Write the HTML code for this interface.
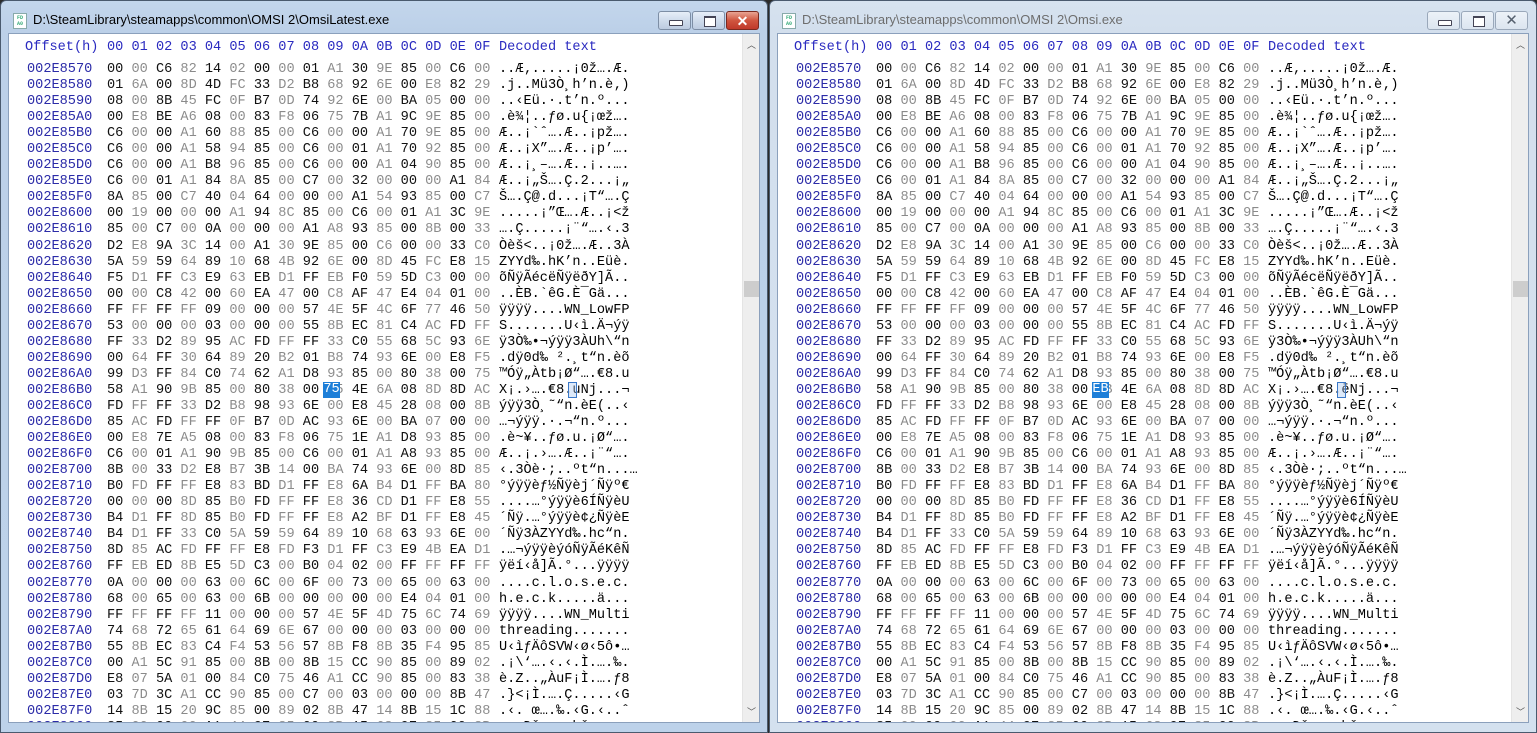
<!DOCTYPE html>
<html><head><meta charset="utf-8">
<style>
*{margin:0;padding:0;box-sizing:border-box}
body{width:1537px;height:733px;overflow:hidden;background:#2b2b2b;font-family:"Liberation Sans",sans-serif;position:relative}
.win{position:absolute;top:0;height:733px;border:1px solid #4a5a6e;border-radius:6px 6px 0 0;overflow:hidden}
.w1{left:0;width:768px;background:linear-gradient(#c3d6ec,#bcd0e8 30px,#bdd2ea);}
.w2{left:769px;width:768px;background:linear-gradient(#d6e2ef,#d3dfed 30px,#d4e1ef);}
.title{position:absolute;left:32px;top:11px;font-size:13px;color:#000}
.w2 .title{color:#6d6d6d}
.ico{position:absolute;left:12px;top:12px;width:14px;height:16px;background:#fff;border:1px solid #8aa;font:bold 5px "Liberation Mono",monospace;color:#3a7;line-height:6px;text-align:center;padding-top:1px}
.btn{position:absolute;top:10px;height:19px;border:1px solid #7d8ea5;border-radius:3px;background:linear-gradient(#e6eef8,#cfdcec 50%,#bccbe0)}
.w2 .btn{border-color:#9aa8ba;background:linear-gradient(#edf2f8,#dce5f0)}
.b1{left:657px;width:33px}.b2{left:691px;width:33px}.b3{left:725px;width:33px;background:linear-gradient(#e8a493,#d0553f 50%,#c0392a)!important;border-color:#7a2a20!important}
.w2 .b3{background:linear-gradient(#edf2f8,#dce5f0)!important;border-color:#9aa8ba!important}
.b1:after{content:"";position:absolute;left:10px;top:8px;width:12px;height:4px;border:1px solid #445;background:#fff;border-radius:1px}
.b2:after{content:"";position:absolute;left:11px;top:4px;width:10px;height:8px;border:1px solid #445;border-top-width:2px;background:#fff}
.b3 span{position:absolute;left:0;right:0;top:0;text-align:center;font:bold 14px/18px "Liberation Sans",sans-serif;color:#fff}
.w2 .b3 span{color:#55606e;font-weight:normal;font-size:15px}
.client{position:absolute;left:7px;top:32px;width:752px;height:690px;background:#fff;border:1px solid #8ba0bc;overflow:hidden}
.sb{position:absolute;right:0;top:0;width:17px;height:100%;background:#eeeeee;border-left:1px solid #e4e4e4}
.sb .th{position:absolute;left:1px;top:247px;width:15px;height:16px;background:#cdcdcd}
.sb .up,.sb .dn{position:absolute;left:0;width:17px;text-align:center;font:9px "Liberation Sans",sans-serif;color:#555}
.sb .up{top:4px}.sb .dn{bottom:4px}
.data{position:absolute;left:18px;top:28px;font:13.6px/16.05px "Liberation Mono",monospace;white-space:pre;color:#000}
.hdr{position:absolute;left:16px;top:6px;font:13.6px/16px "Liberation Mono",monospace;white-space:pre;color:#2a2ac0}
.hdr span{display:inline-block}
.hdr .a{width:82px}.hdr .b{width:392px}
.o{color:#2b2ba8;display:inline-block;width:80px}
.h{display:inline-block;width:392px;background:repeating-linear-gradient(90deg,#111 0 3ch,#8a8a8a 3ch 6ch);-webkit-background-clip:text;background-clip:text;color:transparent}
.hl{position:absolute;width:17px;height:16px;background:#1e7fd8;color:#fff;font:13.6px/16px "Liberation Mono",monospace;text-align:center}
.hb{position:absolute;width:9px;height:16px;border:1px solid #3a78c8;background:rgba(170,200,240,.4)}
</style></head><body>

<div class="win w1">
 <div class="ico">FD<br>A0</div>
 <div class="title">D:\SteamLibrary\steamapps\common\OMSI 2\OmsiLatest.exe</div>
 <div class="btn b1"></div><div class="btn b2"></div><div class="btn b3"><span>✕</span></div>
 <div class="client">
  <div class="hdr"><span class="a">Offset(h)</span><span class="b">00 01 02 03 04 05 06 07 08 09 0A 0B 0C 0D 0E 0F</span>Decoded text</div>
<div class="data"><span class="o">002E8570</span><span class="h">00 00 C6 82 14 02 00 00 01 A1 30 9E 85 00 C6 00 </span>..Æ‚.....¡0ž….Æ.
<span class="o">002E8580</span><span class="h">01 6A 00 8D 4D FC 33 D2 B8 68 92 6E 00 E8 82 29 </span>.j..Mü3Ò¸h’n.è‚)
<span class="o">002E8590</span><span class="h">08 00 8B 45 FC 0F B7 0D 74 92 6E 00 BA 05 00 00 </span>..‹Eü.·.t’n.º...
<span class="o">002E85A0</span><span class="h">00 E8 BE A6 08 00 83 F8 06 75 7B A1 9C 9E 85 00 </span>.è¾¦..ƒø.u{¡œž….
<span class="o">002E85B0</span><span class="h">C6 00 00 A1 60 88 85 00 C6 00 00 A1 70 9E 85 00 </span>Æ..¡`ˆ….Æ..¡pž….
<span class="o">002E85C0</span><span class="h">C6 00 00 A1 58 94 85 00 C6 00 01 A1 70 92 85 00 </span>Æ..¡X”….Æ..¡p’….
<span class="o">002E85D0</span><span class="h">C6 00 00 A1 B8 96 85 00 C6 00 00 A1 04 90 85 00 </span>Æ..¡¸–….Æ..¡..….
<span class="o">002E85E0</span><span class="h">C6 00 01 A1 84 8A 85 00 C7 00 32 00 00 00 A1 84 </span>Æ..¡„Š….Ç.2...¡„
<span class="o">002E85F0</span><span class="h">8A 85 00 C7 40 04 64 00 00 00 A1 54 93 85 00 C7 </span>Š….Ç@.d...¡T“….Ç
<span class="o">002E8600</span><span class="h">00 19 00 00 00 A1 94 8C 85 00 C6 00 01 A1 3C 9E </span>.....¡”Œ….Æ..¡&lt;ž
<span class="o">002E8610</span><span class="h">85 00 C7 00 0A 00 00 00 A1 A8 93 85 00 8B 00 33 </span>….Ç.....¡¨“….‹.3
<span class="o">002E8620</span><span class="h">D2 E8 9A 3C 14 00 A1 30 9E 85 00 C6 00 00 33 C0 </span>Òèš&lt;..¡0ž….Æ..3À
<span class="o">002E8630</span><span class="h">5A 59 59 64 89 10 68 4B 92 6E 00 8D 45 FC E8 15 </span>ZYYd‰.hK’n..Eüè.
<span class="o">002E8640</span><span class="h">F5 D1 FF C3 E9 63 EB D1 FF EB F0 59 5D C3 00 00 </span>õÑÿÃécëÑÿëðY]Ã..
<span class="o">002E8650</span><span class="h">00 00 C8 42 00 60 EA 47 00 C8 AF 47 E4 04 01 00 </span>..ÈB.`êG.È¯Gä...
<span class="o">002E8660</span><span class="h">FF FF FF FF 09 00 00 00 57 4E 5F 4C 6F 77 46 50 </span>ÿÿÿÿ....WN_LowFP
<span class="o">002E8670</span><span class="h">53 00 00 00 03 00 00 00 55 8B EC 81 C4 AC FD FF </span>S.......U‹ì.Ä¬ýÿ
<span class="o">002E8680</span><span class="h">FF 33 D2 89 95 AC FD FF FF 33 C0 55 68 5C 93 6E </span>ÿ3Ò‰•¬ýÿÿ3ÀUh\“n
<span class="o">002E8690</span><span class="h">00 64 FF 30 64 89 20 B2 01 B8 74 93 6E 00 E8 F5 </span>.dÿ0d‰ ².¸t“n.èõ
<span class="o">002E86A0</span><span class="h">99 D3 FF 84 C0 74 62 A1 D8 93 85 00 80 38 00 75 </span>™Óÿ„Àtb¡Ø“….€8.u
<span class="o">002E86B0</span><span class="h">58 A1 90 9B 85 00 80 38 00 75 4E 6A 08 8D 8D AC </span>X¡.›….€8.uNj...¬
<span class="o">002E86C0</span><span class="h">FD FF FF 33 D2 B8 98 93 6E 00 E8 45 28 08 00 8B </span>ýÿÿ3Ò¸˜“n.èE(..‹
<span class="o">002E86D0</span><span class="h">85 AC FD FF FF 0F B7 0D AC 93 6E 00 BA 07 00 00 </span>…¬ýÿÿ.·.¬“n.º...
<span class="o">002E86E0</span><span class="h">00 E8 7E A5 08 00 83 F8 06 75 1E A1 D8 93 85 00 </span>.è~¥..ƒø.u.¡Ø“….
<span class="o">002E86F0</span><span class="h">C6 00 01 A1 90 9B 85 00 C6 00 01 A1 A8 93 85 00 </span>Æ..¡.›….Æ..¡¨“….
<span class="o">002E8700</span><span class="h">8B 00 33 D2 E8 B7 3B 14 00 BA 74 93 6E 00 8D 85 </span>‹.3Òè·;..ºt“n...…
<span class="o">002E8710</span><span class="h">B0 FD FF FF E8 83 BD D1 FF E8 6A B4 D1 FF BA 80 </span>°ýÿÿèƒ½Ñÿèj´Ñÿº€
<span class="o">002E8720</span><span class="h">00 00 00 8D 85 B0 FD FF FF E8 36 CD D1 FF E8 55 </span>....…°ýÿÿè6ÍÑÿèU
<span class="o">002E8730</span><span class="h">B4 D1 FF 8D 85 B0 FD FF FF E8 A2 BF D1 FF E8 45 </span>´Ñÿ.…°ýÿÿè¢¿ÑÿèE
<span class="o">002E8740</span><span class="h">B4 D1 FF 33 C0 5A 59 59 64 89 10 68 63 93 6E 00 </span>´Ñÿ3ÀZYYd‰.hc“n.
<span class="o">002E8750</span><span class="h">8D 85 AC FD FF FF E8 FD F3 D1 FF C3 E9 4B EA D1 </span>.…¬ýÿÿèýóÑÿÃéKêÑ
<span class="o">002E8760</span><span class="h">FF EB ED 8B E5 5D C3 00 B0 04 02 00 FF FF FF FF </span>ÿëí‹å]Ã.°...ÿÿÿÿ
<span class="o">002E8770</span><span class="h">0A 00 00 00 63 00 6C 00 6F 00 73 00 65 00 63 00 </span>....c.l.o.s.e.c.
<span class="o">002E8780</span><span class="h">68 00 65 00 63 00 6B 00 00 00 00 00 E4 04 01 00 </span>h.e.c.k.....ä...
<span class="o">002E8790</span><span class="h">FF FF FF FF 11 00 00 00 57 4E 5F 4D 75 6C 74 69 </span>ÿÿÿÿ....WN_Multi
<span class="o">002E87A0</span><span class="h">74 68 72 65 61 64 69 6E 67 00 00 00 03 00 00 00 </span>threading.......
<span class="o">002E87B0</span><span class="h">55 8B EC 83 C4 F4 53 56 57 8B F8 8B 35 F4 95 85 </span>U‹ìƒÄôSVW‹ø‹5ô•…
<span class="o">002E87C0</span><span class="h">00 A1 5C 91 85 00 8B 00 8B 15 CC 90 85 00 89 02 </span>.¡\‘….‹.‹.Ì.….‰.
<span class="o">002E87D0</span><span class="h">E8 07 5A 01 00 84 C0 75 46 A1 CC 90 85 00 83 38 </span>è.Z..„ÀuF¡Ì.….ƒ8
<span class="o">002E87E0</span><span class="h">03 7D 3C A1 CC 90 85 00 C7 00 03 00 00 00 8B 47 </span>.}&lt;¡Ì.….Ç.....‹G
<span class="o">002E87F0</span><span class="h">14 8B 15 20 9C 85 00 89 02 8B 47 14 8B 15 1C 88 </span>.‹. œ….‰.‹G.‹..ˆ
<span class="o">002E8800</span><span class="h">85 00 00 00 A1 44 9E 85 00 8B 15 68 9E 85 00 8B </span>….¡Dž….‹.hž….‹</div>
  <div class="hl" style="left:314px;top:348px">75</div>
  <div class="hb" style="left:559px;top:348px"></div>
  <div class="sb"><div class="up">︿</div><div class="th"></div><div class="dn">﹀</div></div>
 </div>
</div>

<div class="win w2">
 <div class="ico">FD<br>A0</div>
 <div class="title">D:\SteamLibrary\steamapps\common\OMSI 2\Omsi.exe</div>
 <div class="btn b1"></div><div class="btn b2"></div><div class="btn b3"><span>✕</span></div>
 <div class="client">
  <div class="hdr"><span class="a">Offset(h)</span><span class="b">00 01 02 03 04 05 06 07 08 09 0A 0B 0C 0D 0E 0F</span>Decoded text</div>
<div class="data"><span class="o">002E8570</span><span class="h">00 00 C6 82 14 02 00 00 01 A1 30 9E 85 00 C6 00 </span>..Æ‚.....¡0ž….Æ.
<span class="o">002E8580</span><span class="h">01 6A 00 8D 4D FC 33 D2 B8 68 92 6E 00 E8 82 29 </span>.j..Mü3Ò¸h’n.è‚)
<span class="o">002E8590</span><span class="h">08 00 8B 45 FC 0F B7 0D 74 92 6E 00 BA 05 00 00 </span>..‹Eü.·.t’n.º...
<span class="o">002E85A0</span><span class="h">00 E8 BE A6 08 00 83 F8 06 75 7B A1 9C 9E 85 00 </span>.è¾¦..ƒø.u{¡œž….
<span class="o">002E85B0</span><span class="h">C6 00 00 A1 60 88 85 00 C6 00 00 A1 70 9E 85 00 </span>Æ..¡`ˆ….Æ..¡pž….
<span class="o">002E85C0</span><span class="h">C6 00 00 A1 58 94 85 00 C6 00 01 A1 70 92 85 00 </span>Æ..¡X”….Æ..¡p’….
<span class="o">002E85D0</span><span class="h">C6 00 00 A1 B8 96 85 00 C6 00 00 A1 04 90 85 00 </span>Æ..¡¸–….Æ..¡..….
<span class="o">002E85E0</span><span class="h">C6 00 01 A1 84 8A 85 00 C7 00 32 00 00 00 A1 84 </span>Æ..¡„Š….Ç.2...¡„
<span class="o">002E85F0</span><span class="h">8A 85 00 C7 40 04 64 00 00 00 A1 54 93 85 00 C7 </span>Š….Ç@.d...¡T“….Ç
<span class="o">002E8600</span><span class="h">00 19 00 00 00 A1 94 8C 85 00 C6 00 01 A1 3C 9E </span>.....¡”Œ….Æ..¡&lt;ž
<span class="o">002E8610</span><span class="h">85 00 C7 00 0A 00 00 00 A1 A8 93 85 00 8B 00 33 </span>….Ç.....¡¨“….‹.3
<span class="o">002E8620</span><span class="h">D2 E8 9A 3C 14 00 A1 30 9E 85 00 C6 00 00 33 C0 </span>Òèš&lt;..¡0ž….Æ..3À
<span class="o">002E8630</span><span class="h">5A 59 59 64 89 10 68 4B 92 6E 00 8D 45 FC E8 15 </span>ZYYd‰.hK’n..Eüè.
<span class="o">002E8640</span><span class="h">F5 D1 FF C3 E9 63 EB D1 FF EB F0 59 5D C3 00 00 </span>õÑÿÃécëÑÿëðY]Ã..
<span class="o">002E8650</span><span class="h">00 00 C8 42 00 60 EA 47 00 C8 AF 47 E4 04 01 00 </span>..ÈB.`êG.È¯Gä...
<span class="o">002E8660</span><span class="h">FF FF FF FF 09 00 00 00 57 4E 5F 4C 6F 77 46 50 </span>ÿÿÿÿ....WN_LowFP
<span class="o">002E8670</span><span class="h">53 00 00 00 03 00 00 00 55 8B EC 81 C4 AC FD FF </span>S.......U‹ì.Ä¬ýÿ
<span class="o">002E8680</span><span class="h">FF 33 D2 89 95 AC FD FF FF 33 C0 55 68 5C 93 6E </span>ÿ3Ò‰•¬ýÿÿ3ÀUh\“n
<span class="o">002E8690</span><span class="h">00 64 FF 30 64 89 20 B2 01 B8 74 93 6E 00 E8 F5 </span>.dÿ0d‰ ².¸t“n.èõ
<span class="o">002E86A0</span><span class="h">99 D3 FF 84 C0 74 62 A1 D8 93 85 00 80 38 00 75 </span>™Óÿ„Àtb¡Ø“….€8.u
<span class="o">002E86B0</span><span class="h">58 A1 90 9B 85 00 80 38 00 EB 4E 6A 08 8D 8D AC </span>X¡.›….€8.ëNj...¬
<span class="o">002E86C0</span><span class="h">FD FF FF 33 D2 B8 98 93 6E 00 E8 45 28 08 00 8B </span>ýÿÿ3Ò¸˜“n.èE(..‹
<span class="o">002E86D0</span><span class="h">85 AC FD FF FF 0F B7 0D AC 93 6E 00 BA 07 00 00 </span>…¬ýÿÿ.·.¬“n.º...
<span class="o">002E86E0</span><span class="h">00 E8 7E A5 08 00 83 F8 06 75 1E A1 D8 93 85 00 </span>.è~¥..ƒø.u.¡Ø“….
<span class="o">002E86F0</span><span class="h">C6 00 01 A1 90 9B 85 00 C6 00 01 A1 A8 93 85 00 </span>Æ..¡.›….Æ..¡¨“….
<span class="o">002E8700</span><span class="h">8B 00 33 D2 E8 B7 3B 14 00 BA 74 93 6E 00 8D 85 </span>‹.3Òè·;..ºt“n...…
<span class="o">002E8710</span><span class="h">B0 FD FF FF E8 83 BD D1 FF E8 6A B4 D1 FF BA 80 </span>°ýÿÿèƒ½Ñÿèj´Ñÿº€
<span class="o">002E8720</span><span class="h">00 00 00 8D 85 B0 FD FF FF E8 36 CD D1 FF E8 55 </span>....…°ýÿÿè6ÍÑÿèU
<span class="o">002E8730</span><span class="h">B4 D1 FF 8D 85 B0 FD FF FF E8 A2 BF D1 FF E8 45 </span>´Ñÿ.…°ýÿÿè¢¿ÑÿèE
<span class="o">002E8740</span><span class="h">B4 D1 FF 33 C0 5A 59 59 64 89 10 68 63 93 6E 00 </span>´Ñÿ3ÀZYYd‰.hc“n.
<span class="o">002E8750</span><span class="h">8D 85 AC FD FF FF E8 FD F3 D1 FF C3 E9 4B EA D1 </span>.…¬ýÿÿèýóÑÿÃéKêÑ
<span class="o">002E8760</span><span class="h">FF EB ED 8B E5 5D C3 00 B0 04 02 00 FF FF FF FF </span>ÿëí‹å]Ã.°...ÿÿÿÿ
<span class="o">002E8770</span><span class="h">0A 00 00 00 63 00 6C 00 6F 00 73 00 65 00 63 00 </span>....c.l.o.s.e.c.
<span class="o">002E8780</span><span class="h">68 00 65 00 63 00 6B 00 00 00 00 00 E4 04 01 00 </span>h.e.c.k.....ä...
<span class="o">002E8790</span><span class="h">FF FF FF FF 11 00 00 00 57 4E 5F 4D 75 6C 74 69 </span>ÿÿÿÿ....WN_Multi
<span class="o">002E87A0</span><span class="h">74 68 72 65 61 64 69 6E 67 00 00 00 03 00 00 00 </span>threading.......
<span class="o">002E87B0</span><span class="h">55 8B EC 83 C4 F4 53 56 57 8B F8 8B 35 F4 95 85 </span>U‹ìƒÄôSVW‹ø‹5ô•…
<span class="o">002E87C0</span><span class="h">00 A1 5C 91 85 00 8B 00 8B 15 CC 90 85 00 89 02 </span>.¡\‘….‹.‹.Ì.….‰.
<span class="o">002E87D0</span><span class="h">E8 07 5A 01 00 84 C0 75 46 A1 CC 90 85 00 83 38 </span>è.Z..„ÀuF¡Ì.….ƒ8
<span class="o">002E87E0</span><span class="h">03 7D 3C A1 CC 90 85 00 C7 00 03 00 00 00 8B 47 </span>.}&lt;¡Ì.….Ç.....‹G
<span class="o">002E87F0</span><span class="h">14 8B 15 20 9C 85 00 89 02 8B 47 14 8B 15 1C 88 </span>.‹. œ….‰.‹G.‹..ˆ
<span class="o">002E8800</span><span class="h">85 00 00 00 A1 44 9E 85 00 8B 15 68 9E 85 00 8B </span>….¡Dž….‹.hž….‹</div>
  <div class="hl" style="left:314px;top:348px">EB</div>
  <div class="hb" style="left:559px;top:348px"></div>
  <div class="sb"><div class="up">︿</div><div class="th"></div><div class="dn">﹀</div></div>
 </div>
</div>
</body></html>
